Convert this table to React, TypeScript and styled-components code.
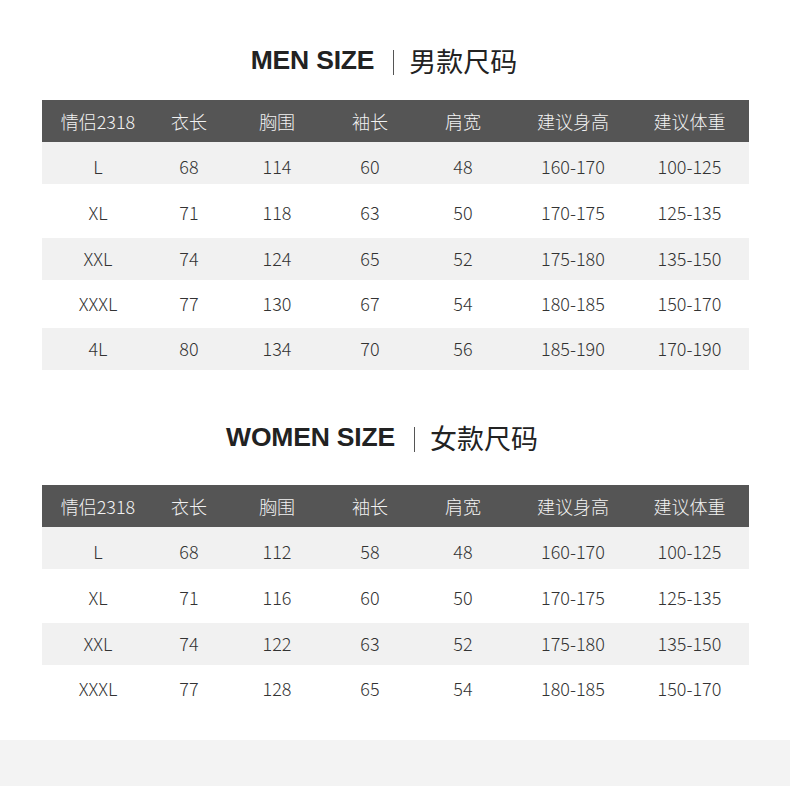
import React from "react";
import styled, { createGlobalStyle } from "styled-components";

const GlobalStyle = createGlobalStyle`
  html, body {
    margin: 0;
    padding: 0;
    background: #ffffff;
  }
  body {
    font-family: "Noto Sans CJK SC", "Noto Sans", sans-serif;
  }
`;

const Page = styled.div`
  width: 790px;
  height: 786px;
  display: flex;
  flex-direction: column;
  background: #ffffff;
  overflow: hidden;
`;

const Section = styled.section<{ $top: number; $gap: number }>`
  display: flex;
  flex-direction: column;
  padding-top: ${(p) => p.$top}px;
  gap: ${(p) => p.$gap}px;
`;

const Title = styled.h2<{ $offset: number }>`
  margin: 0;
  height: 50px;
  display: flex;
  align-items: center;
  justify-content: center;
  padding-right: ${(p) => p.$offset}px;
  color: #222222;
`;

const TitleEn = styled.span`
  font-family: "Liberation Sans", Arial, sans-serif;
  font-weight: 700;
  font-size: 26.5px;
  letter-spacing: -0.2px;
`;

const Divider = styled.span`
  width: 1px;
  height: 25px;
  background: #555555;
  margin: 4px 15px 0 19px;
`;

const TitleCn = styled.span`
  font-family: "Noto Sans CJK SC", sans-serif;
  font-weight: 400;
  font-size: 27px;
`;

const Table = styled.div`
  margin: 0 41px 0 42px;
  display: flex;
  flex-direction: column;
`;

const cols = "112px 70px 106px 80px 106px 114px 119px";

const HeadRow = styled.div`
  display: grid;
  grid-template-columns: ${cols};
  height: 42px;
  align-items: center;
  background: #555555;
  color: #f2f2f2;
`;

const Row = styled.div<{ $h: number; $shade: boolean; $shift: number }>`
  display: grid;
  grid-template-columns: ${cols};
  height: ${(p) => p.$h}px;
  align-items: center;
  background: ${(p) => (p.$shade ? "#f1f1f1" : "#ffffff")};
  color: #333333;
  padding-top: ${(p) => Math.max(0, p.$shift)}px;
  padding-bottom: ${(p) => Math.max(0, -p.$shift)}px;
  box-sizing: border-box;
`;

const Cell = styled.div`
  text-align: center;
  font-family: "Noto Sans CJK SC", sans-serif;
  font-weight: 300;
  font-size: 18px;
  line-height: 1;
  white-space: nowrap;
`;

const Band = styled.div`
  margin-top: auto;
  height: 46px;
  background: #f3f3f3;
`;

const headers = ["情侣2318", "衣长", "胸围", "袖长", "肩宽", "建议身高", "建议体重"];

const menRows = [
  ["L", "68", "114", "60", "48", "160-170", "100-125"],
  ["XL", "71", "118", "63", "50", "170-175", "125-135"],
  ["XXL", "74", "124", "65", "52", "175-180", "135-150"],
  ["XXXL", "77", "130", "67", "54", "180-185", "150-170"],
  ["4L", "80", "134", "70", "56", "185-190", "170-190"],
];

const womenRows = [
  ["L", "68", "112", "58", "48", "160-170", "100-125"],
  ["XL", "71", "116", "60", "50", "170-175", "125-135"],
  ["XXL", "74", "122", "63", "52", "175-180", "135-150"],
  ["XXXL", "77", "128", "65", "54", "180-185", "150-170"],
];

const heights = [42, 54, 42, 48, 42];
const shifts = [6, 2, -3, -3, -2];

function SizeTable({ rows }: { rows: string[][] }) {
  return (
    <Table>
      <HeadRow>
        {headers.map((h) => (
          <Cell key={h}>{h}</Cell>
        ))}
      </HeadRow>
      {rows.map((r, i) => (
        <Row key={r[0]} $h={heights[i]} $shade={i % 2 === 0} $shift={shifts[i]}>
          {r.map((c, j) => (
            <Cell key={j}>{c}</Cell>
          ))}
        </Row>
      ))}
    </Table>
  );
}

export default function App() {
  return (
    <Page>
      <GlobalStyle />
      <Section $top={35} $gap={15}>
        <Title $offset={22}>
          <TitleEn>MEN SIZE</TitleEn>
          <Divider />
          <TitleCn>男款尺码</TitleCn>
        </Title>
        <SizeTable rows={menRows} />
      </Section>
      <Section $top={42} $gap={23}>
        <Title $offset={26}>
          <TitleEn>WOMEN SIZE</TitleEn>
          <Divider />
          <TitleCn>女款尺码</TitleCn>
        </Title>
        <SizeTable rows={womenRows} />
      </Section>
      <Band />
    </Page>
  );
}
